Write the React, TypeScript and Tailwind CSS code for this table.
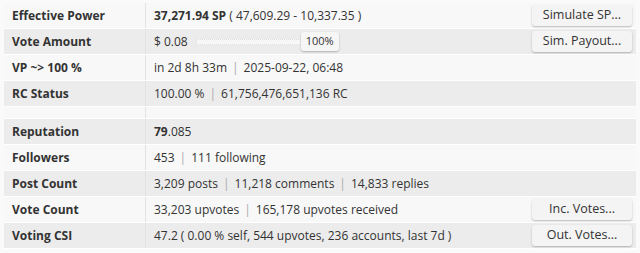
import React from "react";

type Row = {
  label: string;
  value: React.ReactNode;
  button?: string;
};

const Sep = () => <span className="mx-[5px] text-[#aaa]">|</span>;

const VoteSlider = () => (
  <span className="flex items-center">
    <span>$ 0.08</span>
    <span className="ml-[8px] h-[6px] w-[105px] border border-dotted border-[#ddd] bg-[#f7f7f7]" />
    <span className="flex h-[19px] items-center rounded-[3px] bg-[#f6f6f6] px-[5px] text-[11px] shadow-[0_1px_2px_rgba(0,0,0,0.25)]">
      100%
    </span>
  </span>
);

const rows: (Row | null)[] = [
  {
    label: "Effective Power",
    value: (
      <span>
        <b className="font-bold">37,271.94 SP</b> ( 47,609.29 - 10,337.35 )
      </span>
    ),
    button: "Simulate SP...",
  },
  { label: "Vote Amount", value: <VoteSlider />, button: "Sim. Payout..." },
  {
    label: "VP ~> 100 %",
    value: (
      <span>
        in 2d 8h 33m
        <Sep />
        2025-09-22, 06:48
      </span>
    ),
  },
  {
    label: "RC Status",
    value: (
      <span>
        100.00 %
        <Sep />
        61,756,476,651,136 RC
      </span>
    ),
  },
  null,
  {
    label: "Reputation",
    value: (
      <span>
        <b className="font-bold">79</b>.085
      </span>
    ),
  },
  {
    label: "Followers",
    value: (
      <span>
        453
        <Sep />
        111 following
      </span>
    ),
  },
  {
    label: "Post Count",
    value: (
      <span>
        3,209 posts
        <Sep />
        11,218 comments
        <Sep />
        14,833 replies
      </span>
    ),
  },
  {
    label: "Vote Count",
    value: (
      <span>
        33,203 upvotes
        <Sep />
        165,178 upvotes received
      </span>
    ),
    button: "Inc. Votes...",
  },
  {
    label: "Voting CSI",
    value: <span>47.2 ( 0.00 % self, 544 upvotes, 236 accounts, last 7d )</span>,
    button: "Out. Votes...",
  },
];

const App = () => {
  return (
    <div
      className="h-[253px] w-[640px] bg-[#fafafa] px-[4px] pt-[3px] text-[12px] text-[#333]"
      style={{ fontFamily: '"Open Sans", sans-serif' }}
    >
      <div className="flex flex-col">
        {rows.map((row, i) => {
          const stripe = i % 2 === 1 ? "bg-[#ececec]" : "bg-[#f8f8f8]";
          if (!row) {
            return (
              <div key={i} className={`flex h-[12px] border-b border-white ${stripe}`}>
                <div className="w-[142px] border-r border-[#e2e2e2]" />
              </div>
            );
          }
          return (
            <div key={i} className={`flex h-[26px] border-b border-white ${stripe}`}>
              <div className="flex w-[142px] items-center border-r border-[#e2e2e2] pl-[8px] font-bold">
                {row.label}
              </div>
              <div className="flex flex-1 items-center justify-between pl-[8px] pr-[4px]">
                <span className="flex items-center whitespace-nowrap">{row.value}</span>
                {row.button && (
                  <button className="h-[21px] w-[100px] rounded-[3px] bg-[#f4f4f4] text-[12.5px] text-[#333] shadow-[0_1px_2px_rgba(0,0,0,0.25)]">
                    {row.button}
                  </button>
                )}
              </div>
            </div>
          );
        })}
      </div>
    </div>
  );
};

export default App;
